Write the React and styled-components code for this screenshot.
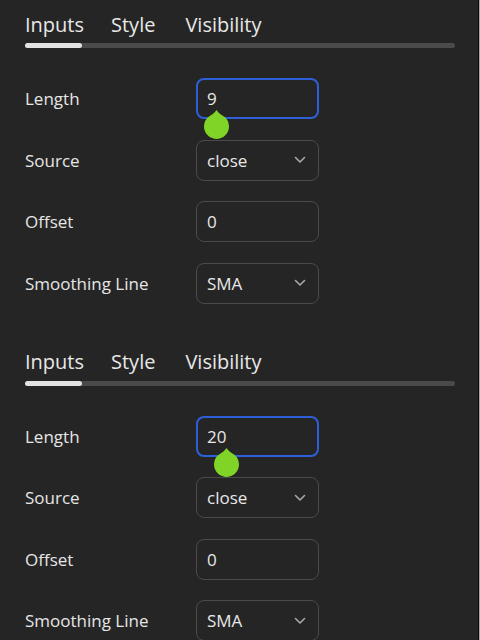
import React from "react";
import styled, { createGlobalStyle } from "styled-components";

const Global = createGlobalStyle`
  html, body { margin: 0; padding: 0; background: #252525; }
  * { box-sizing: border-box; }
`;

const Frame = styled.div`
  width: 480px;
  height: 640px;
  overflow: hidden;
  background: #252525;
  color: #e6e6e6;
  font-family: "Open Sans", Lato, sans-serif;
  box-shadow: inset -1px 0 0 #a8a8a8, inset -2px 0 0 #0b0b0b;
`;

const Section = styled.section`
  padding: ${(p) => (p.$first ? "10px" : "44px")} 25px 0 25px;
  width: 480px;
`;

const Tabs = styled.div`
  display: flex;
  gap: 27px;
  height: 28px;
  align-items: center;
`;

const Tab = styled.div`
  font-size: 20px;
  font-weight: 500;
  color: #e8e8e8;
  &:last-child { margin-left: 3px; }
`;

const Track = styled.div`
  margin-top: 5px;
  width: 430px;
  height: 5px;
  border-radius: 3px;
  background: #4a4a4a;
  display: flex;
`;

const Indicator = styled.div`
  width: 57px;
  height: 5px;
  border-radius: 3px;
  background: #e2e2e2;
`;

const Rows = styled.div`
  margin-top: 30px;
  display: flex;
  flex-direction: column;
  gap: 20.5px;
`;

const Row = styled.div`
  display: grid;
  grid-template-columns: 171px 123px;
  align-items: center;
  height: 41px;
`;

const Label = styled.div`
  font-size: 17px;
  color: #e6e6e6;
`;

const Field = styled.div`
  position: relative;
  height: 41px;
  border-radius: 8px;
  border: ${(p) => (p.$focused ? "2px solid #2e5fd8" : "1px solid #4a4a4a")};
  padding-left: ${(p) => (p.$focused ? "9px" : "10px")};
  padding-right: 12px;
  display: flex;
  align-items: center;
  justify-content: space-between;
  font-size: 17px;
  color: #e8e8e8;
`;

const Handle = styled.svg`
  position: absolute;
  top: 30px;
  width: 25px;
  height: 29px;
`;

const Chevron = () => (
  <svg width="12" height="8" viewBox="0 0 12 8">
    <path d="M1.5 1.5 L6 6 L10.5 1.5" fill="none" stroke="#a8a8a8" strokeWidth="1.6" strokeLinecap="round" strokeLinejoin="round" />
  </svg>
);

const Drop = ({ left }) => (
  <Handle viewBox="0 0 25 29" style={{ left }}>
    <path d="M12.5 0 C14 3 18 5 20.65 7.03 A12.5 12.5 0 1 1 4.35 7.03 C7 5 11 3 12.5 0 Z" fill="#80d427" />
  </Handle>
);

const Panel = ({ first, length, handleLeft }) => (
  <Section $first={first}>
    <Tabs>
      <Tab>Inputs</Tab>
      <Tab>Style</Tab>
      <Tab>Visibility</Tab>
    </Tabs>
    <Track>
      <Indicator />
    </Track>
    <Rows>
      <Row>
        <Label>Length</Label>
        <Field $focused>
          <span>{length}</span>
          <Drop left={handleLeft} />
        </Field>
      </Row>
      <Row>
        <Label>Source</Label>
        <Field>
          <span>close</span>
          <Chevron />
        </Field>
      </Row>
      <Row>
        <Label>Offset</Label>
        <Field>
          <span>0</span>
        </Field>
      </Row>
      <Row>
        <Label>Smoothing Line</Label>
        <Field>
          <span>SMA</span>
          <Chevron />
        </Field>
      </Row>
    </Rows>
  </Section>
);

export default function App() {
  return (
    <>
      <Global />
      <Frame>
        <Panel first length="9" handleLeft="6px" />
        <Panel length="20" handleLeft="16px" />
      </Frame>
    </>
  );
}
